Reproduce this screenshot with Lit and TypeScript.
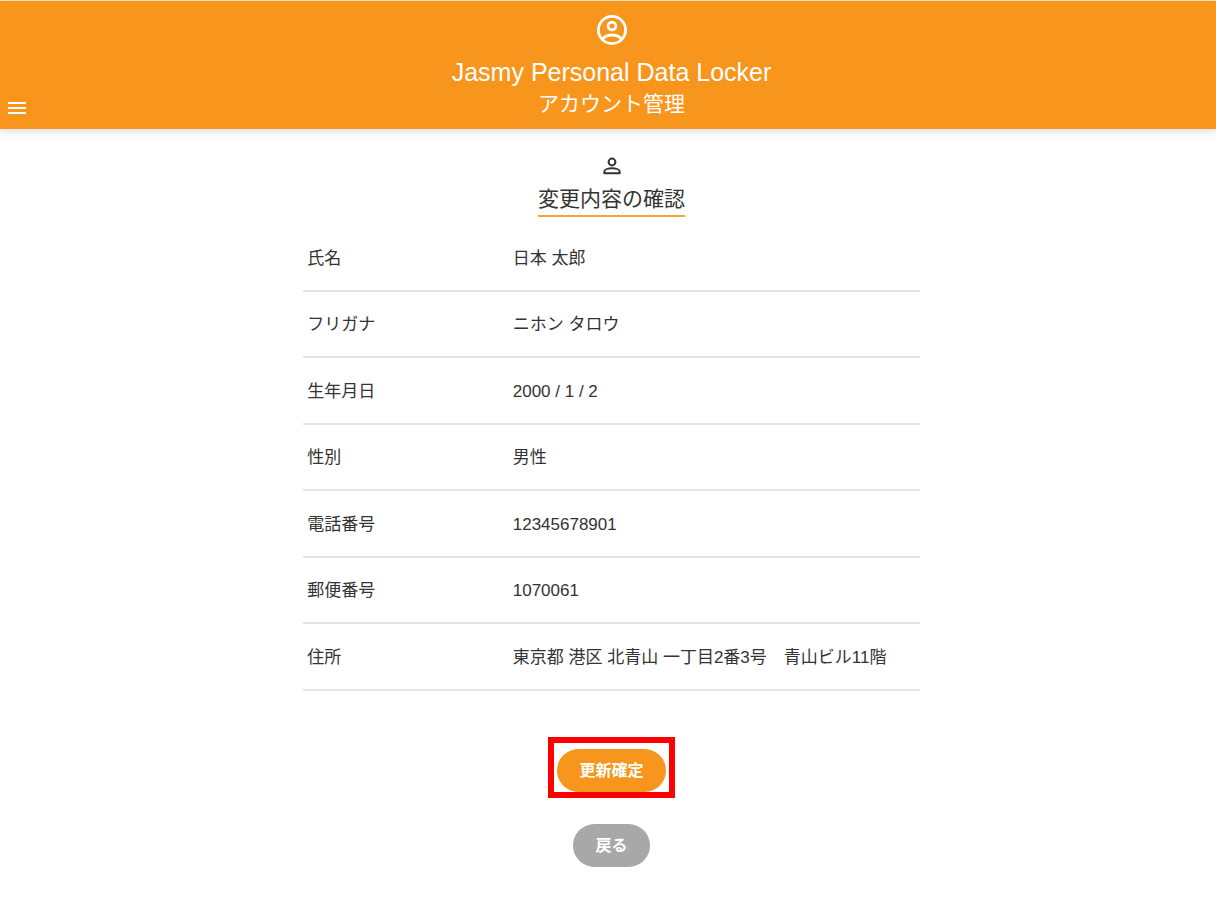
import { LitElement, html, css } from "lit";
import { customElement, property } from "lit/decorators.js";

interface Field {
  label: string;
  value: string;
}

@customElement("app-header")
class AppHeader extends LitElement {
  static styles = css`
    :host {
      display: block;
    }
    .bar {
      display: grid;
      grid-template-columns: 1fr auto 1fr;
      align-items: end;
      height: 128px;
      box-sizing: border-box;
      padding-left: 7px;
      background: #f8951d;
      color: #fff;
      box-shadow: 0 2px 8px rgba(0, 0, 0, 0.16);
    }
    .menu {
      justify-self: start;
      margin: 0 0 14px;
      padding: 0;
      border: 0;
      background: none;
      color: inherit;
      line-height: 0;
      cursor: pointer;
    }
    .brand {
      display: flex;
      flex-direction: column;
      align-items: center;
      padding-bottom: 11px;
    }
    .title {
      margin: 8px 0 0;
      font-size: 25px;
      font-weight: 400;
      line-height: 36px;
    }
    .section {
      margin: 0;
      font-size: 21px;
      line-height: 28px;
    }
  `;

  render() {
    return html`
      <header class="bar">
        <button class="menu" aria-label="メニュー">
          <svg width="20" height="14" viewBox="0 0 20 14" fill="currentColor">
            <path d="M1 1h18v2H1zM1 6h18v2H1zM1 11h18v2H1z" />
          </svg>
        </button>
        <div class="brand">
          <svg width="32" height="32" viewBox="0 0 32 32" fill="none" stroke="currentColor" stroke-width="2.8">
            <circle cx="16" cy="16" r="13.6" />
            <circle cx="16" cy="12" r="3.9" />
            <path d="M6.5 25C8.8 22.200 12.200 21 16 21s7.200 1.200 9.500 4" />
          </svg>
          <h1 class="title">Jasmy Personal Data Locker</h1>
          <p class="section">アカウント管理</p>
        </div>
      </header>
    `;
  }
}

@customElement("field-table")
class FieldTable extends LitElement {
  @property({ attribute: false }) fields: Field[] = [];

  static styles = css`
    :host {
      display: block;
    }
    .table {
      width: 100%;
      border-collapse: separate;
      border-spacing: 0;
      table-layout: fixed;
      font-size: 17px;
      line-height: 24px;
    }
    .row {
      height: 67px;
    }
    .row:nth-child(even) {
      height: 66px;
    }
    .label,
    .value {
      padding: 2px 4px 0;
      border-bottom: 2px solid #e4e4e4;
      text-align: left;
      font-weight: 400;
      white-space: nowrap;
      box-sizing: border-box;
    }
    .label {
      width: 33.333%;
    }
  `;

  render() {
    return html`
      <table class="table">
        <tbody>
          ${this.fields.map(
            (f) => html`
              <tr class="row">
                <th class="label" scope="row">${f.label}</th>
                <td class="value">${f.value}</td>
              </tr>
            `,
          )}
        </tbody>
      </table>
    `;
  }
}

@customElement("app-root")
class AppRoot extends LitElement {
  private fields: Field[] = [
    { label: "氏名", value: "日本 太郎" },
    { label: "フリガナ", value: "ニホン タロウ" },
    { label: "生年月日", value: "2000 / 1 / 2" },
    { label: "性別", value: "男性" },
    { label: "電話番号", value: "12345678901" },
    { label: "郵便番号", value: "1070061" },
    { label: "住所", value: "東京都 港区 北青山 一丁目2番3号　青山ビル11階" },
  ];

  static styles = css`
    :host {
      display: block;
      min-height: 100vh;
      box-sizing: border-box;
      border-top: 1px solid #fbe6c8;
      background: #fff;
      color: #333;
      font-family: "Liberation Sans", "Noto Sans CJK JP", sans-serif;
    }
    .content {
      display: flex;
      flex-direction: column;
      align-items: center;
      padding: 28px 0 32px 7px;
    }
    .heading {
      margin: 8px 0;
      border-bottom: 2px solid #f9a13a;
      font-size: 21px;
      font-weight: 400;
      line-height: 32px;
    }
    .fields {
      width: 51%;
      min-width: 560px;
    }
    .actions {
      display: flex;
      flex-direction: column;
      align-items: center;
      gap: 26px;
      margin-top: 46px;
    }
    .frame {
      padding: 6px 3px 0;
      border: 6px solid #f00;
    }
    .button {
      display: block;
      height: 43px;
      padding: 0 22px;
      border: 0;
      border-radius: 22px;
      color: #fff;
      font: inherit;
      font-size: 16px;
      font-weight: 700;
      line-height: 24px;
      cursor: pointer;
    }
    .primary {
      background: #f8951d;
    }
    .secondary {
      background: #a8a8a8;
    }
  `;

  render() {
    return html`
      <app-header></app-header>
      <main class="content">
        <svg width="18" height="18" viewBox="0 0 18 18" fill="none" stroke="#333" stroke-width="2">
          <circle cx="9" cy="5" r="3.400" />
          <path d="M1.300 16.200v-1.500C1.300 12.400 5.500 11.300 9 11.300s7.700 1.100 7.700 3.400v1.500z" stroke-linejoin="round" />
        </svg>
        <h2 class="heading">変更内容の確認</h2>
        <field-table class="fields" .fields=${this.fields}></field-table>
        <div class="actions">
          <div class="frame">
            <button class="button primary">更新確定</button>
          </div>
          <button class="button secondary">戻る</button>
        </div>
      </main>
    `;
  }
}
